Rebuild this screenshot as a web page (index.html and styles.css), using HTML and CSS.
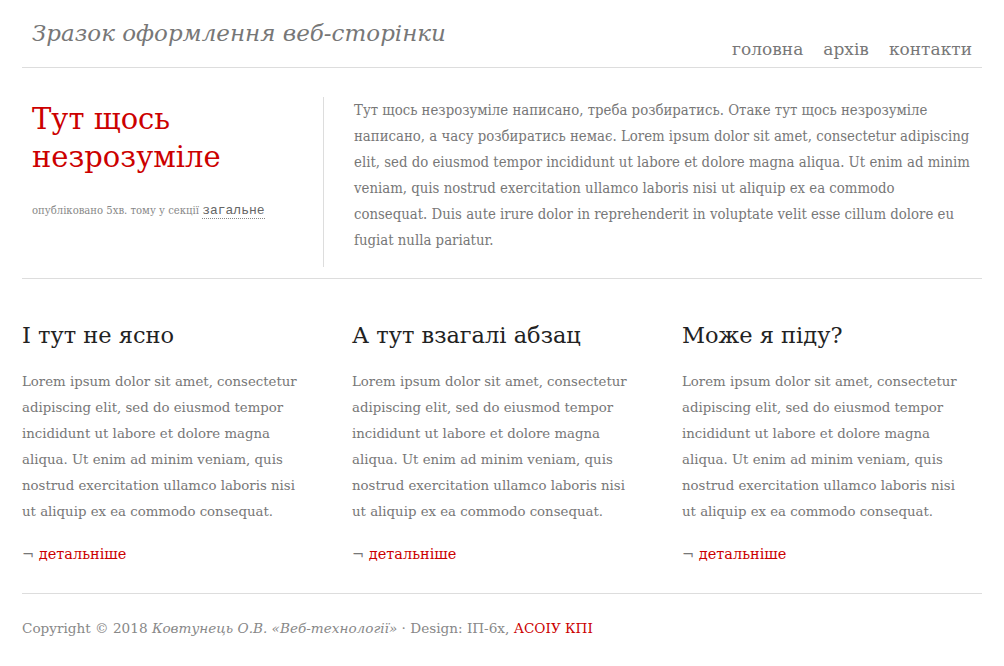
FILE: index.html
```html
<!DOCTYPE html>
<html lang="uk">
<head>
<meta charset="utf-8">
<title>Зразок оформлення веб-сторінки</title>
<link rel="stylesheet" href="styles.css">
</head>
<body>
<div class="page">
  <header class="site-header">
    <div class="logo">Зразок оформлення веб-сторінки</div>
    <nav class="nav">
      <a href="#">головна</a>
      <a href="#">архів</a>
      <a href="#">контакти</a>
    </nav>
  </header>

  <section class="hero">
    <div class="hero-left">
      <h1 class="hero-title">Тут щось незрозуміле</h1>
      <p class="meta">опубліковано 5хв. тому у секції <a href="#" class="tag">загальне</a></p>
    </div>
    <div class="hero-right">
      <p class="intro">Тут щось незрозуміле написано, треба розбиратись. Отаке тут щось незрозуміле написано, а часу розбиратись немає. Lorem ipsum dolor sit amet, consectetur adipiscing elit, sed do eiusmod tempor incididunt ut labore et dolore magna aliqua. Ut enim ad minim veniam, quis nostrud exercitation ullamco laboris nisi ut aliquip ex ea commodo consequat. Duis aute irure dolor in reprehenderit in voluptate velit esse cillum dolore eu fugiat nulla pariatur.</p>
    </div>
  </section>

  <section class="columns">
    <article class="col">
      <h2 class="col-title">І тут не ясно</h2>
      <p class="col-text">Lorem ipsum dolor sit amet, consectetur adipiscing elit, sed do eiusmod tempor incididunt ut labore et dolore magna aliqua. Ut enim ad minim veniam, quis nostrud exercitation ullamco laboris nisi ut aliquip ex ea commodo consequat.</p>
      <p class="more"><span class="not">¬</span> <a href="#">детальніше</a></p>
    </article>
    <article class="col">
      <h2 class="col-title">А тут взагалі абзац</h2>
      <p class="col-text">Lorem ipsum dolor sit amet, consectetur adipiscing elit, sed do eiusmod tempor incididunt ut labore et dolore magna aliqua. Ut enim ad minim veniam, quis nostrud exercitation ullamco laboris nisi ut aliquip ex ea commodo consequat.</p>
      <p class="more"><span class="not">¬</span> <a href="#">детальніше</a></p>
    </article>
    <article class="col">
      <h2 class="col-title">Може я піду?</h2>
      <p class="col-text">Lorem ipsum dolor sit amet, consectetur adipiscing elit, sed do eiusmod tempor incididunt ut labore et dolore magna aliqua. Ut enim ad minim veniam, quis nostrud exercitation ullamco laboris nisi ut aliquip ex ea commodo consequat.</p>
      <p class="more"><span class="not">¬</span> <a href="#">детальніше</a></p>
    </article>
  </section>

  <footer class="site-footer">
    Copyright © 2018 <em>Ковтунець О.В. «Веб-технології»</em> · Design: ІП-6х, <a href="#">АСОІУ КПІ</a>
  </footer>
</div>
</body>
</html>
```

FILE: styles.css
```css
html, body {
  margin: 0;
  padding: 0;
  background: #fff;
}

body {
  font-family: "DejaVu Serif", "Liberation Serif", serif;
  color: #777;
}

a {
  text-decoration: none;
}

.page {
  width: 960px;
  margin: 0 auto;
}

.site-header {
  display: flex;
  justify-content: space-between;
  align-items: flex-end;
  height: 68px;
  border-bottom: 1px solid #ddd;
  box-sizing: border-box;
}

.logo {
  align-self: flex-start;
  padding: 18px 0 0 10px;
  font-size: 23px;
  font-style: italic;
  color: #777;
  line-height: 30px;
}

.nav {
  display: flex;
  gap: 20px;
  padding: 0 10px 7px 0;
  font-size: 17px;
  line-height: 22px;
}

.nav a {
  color: #777;
}

.hero {
  display: flex;
  padding: 29px 0 11px;
  border-bottom: 1px solid #ddd;
}

.hero-left {
  border-right: 1px solid #ddd;
  padding: 0 10px;
  box-sizing: border-box;
  width: 302px;
}

.hero-title {
  margin: 3px 0 0;
  font-weight: normal;
  font-size: 29px;
  line-height: 38px;
  color: #c00;
}

.meta {
  margin: 27px 0 0;
  font-family: "DejaVu Serif Condensed", "DejaVu Serif", serif;
  font-stretch: condensed;
  font-size: 11.2px;
  color: #888;
}

.tag {
  font-family: "Liberation Mono", monospace;
  font-size: 13px;
  color: #666;
  border-bottom: 1px dotted #888;
}

.hero-right {
  flex: 1;
  padding: 0 0 0 30px;
}

.intro {
  margin: 0 0 14px;
  font-family: "DejaVu Serif Condensed", "DejaVu Serif", serif;
  font-stretch: condensed;
  font-size: 14.8px;
  line-height: 26px;
  color: #777;
  width: 616.5px;
}

.columns {
  display: flex;
  gap: 30px;
  padding: 42px 0 0;
  border-bottom: 1px solid #ddd;
}

.col {
  width: 300px;
}

.col-title {
  margin: 0;
  font-weight: normal;
  font-size: 22.5px;
  line-height: 29px;
  color: #222;
}

.col-text {
  width: 285px;
  margin: 19px 0 0;
  font-size: 13.3px;
  line-height: 26px;
  color: #777;
}

.more {
  margin: 16px 0 26px;
  font-size: 14.5px;
  line-height: 26px;
}

.more .not {
  color: #777;
}

.more a {
  color: #c00;
}

.site-footer {
  padding: 21px 0 20px;
  font-size: 13.6px;
  line-height: 26px;
  color: #888;
}

.site-footer em {
  color: #888;
}

.site-footer a {
  color: #c00;
}
```
